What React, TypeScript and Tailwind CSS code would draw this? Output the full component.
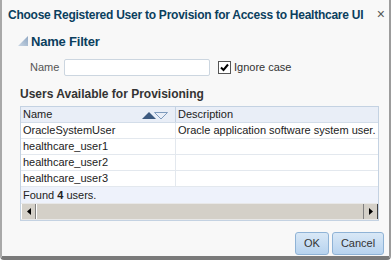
import React from 'react';

const rows = [
  { name: 'OracleSystemUser', desc: 'Oracle application software system user.' },
  { name: 'healthcare_user1', desc: '' },
  { name: 'healthcare_user2', desc: '' },
  { name: 'healthcare_user3', desc: '' },
];

function SortIcons() {
  return (
    <svg width="28" height="10" viewBox="0 0 28 10">
      <polygon points="1,9 8,2 15,9" fill="#3d5a80" />
      <polygon points="13.5,2.5 26.5,2.5 20,9" fill="none" stroke="#7f9bbd" strokeWidth="1" />
    </svg>
  );
}

export default function App() {
  return (
    <div
      className="w-[391px] h-[260px] bg-[#f8f8f8] border-l-2 border-r-2 border-b-4 border-l-[#a9a9a9] border-r-[#9c9c9c] border-b-[#7a7a7a] rounded-b-[4px] overflow-hidden text-[11px] text-[#222]"
      style={{ fontFamily: '"Liberation Sans", Arial, sans-serif' }}
    >
      <div className="flex items-center justify-between pl-[6px] pr-[4px] h-[30px]">
        <span className="font-bold text-[12px] text-[#0b3f5e] leading-none whitespace-nowrap tracking-[-0.25px]">
          Choose Registered User to Provision for Access to Healthcare UI
        </span>
        <span className="text-[14px] text-[#555] leading-none pb-[3px]">×</span>
      </div>

      <div className="flex items-center gap-[2px] pl-[16px] h-[22px]">
        <svg width="11" height="11" viewBox="0 0 11 11">
          <defs>
            <linearGradient id="tg" x1="0" y1="1" x2="1" y2="0">
              <stop offset="0" stopColor="#c9d6e4" />
              <stop offset="1" stopColor="#8ea6c2" />
            </linearGradient>
          </defs>
          <polygon points="0,10 10,0 10,10" fill="url(#tg)" />
        </svg>
        <span className="font-bold text-[13px] text-[#0b3f5e] leading-none tracking-[-0.2px]">Name Filter</span>
      </div>

      <div className="flex items-center pl-[28px] h-[30px]">
        <span className="text-[#555] text-[11px] w-[34px]">Name</span>
        <div className="w-[146px] h-[17px] bg-white border border-[#ccd6e0] rounded-[2px]" />
        <div className="ml-[8px] w-[13px] h-[13px] border border-[#555] bg-white flex items-center justify-center">
          <svg width="9" height="9" viewBox="0 0 9 9">
            <path d="M1 4.5 L3.5 7 L8 1.5" fill="none" stroke="#000" strokeWidth="2" />
          </svg>
        </div>
        <span className="ml-[3px] text-[#333]">Ignore case</span>
      </div>

      <div className="flex items-center pl-[18px] font-bold text-[12px] text-[#333] leading-none h-[24px]">
        Users Available for Provisioning
      </div>

      <div className="ml-[18px] w-[359px] border border-[#c4d2e2] bg-white">
        <div className="flex h-[16px] bg-[#e9eef7] border-b border-[#d3dde9]">
          <div className="w-[155px] flex items-center justify-between pl-[2px] pr-[6px] border-r border-[#c4d2e2]">
            <span>Name</span>
            <SortIcons />
          </div>
          <div className="flex-1 flex items-center pl-[2px]">Description</div>
        </div>
        {rows.map((r) => (
          <div key={r.name} className="flex h-[16px] border-b border-[#e3e8ee]">
            <div className="w-[155px] flex items-center pl-[2px] border-r border-[#e3e8ee]">{r.name}</div>
            <div className="flex-1 flex items-center pl-[2px] whitespace-nowrap overflow-hidden">{r.desc}</div>
          </div>
        ))}
        <div className="h-[16px] flex items-center pl-[2px] bg-[#eef2fb]">
          <span>
            Found <b>4</b> users.
          </span>
        </div>
        <div className="flex h-[17px] bg-[#d4d0c8] border-t border-[#e8e8e8] border-b border-[#404040]">
          <div className="w-[15px] h-full bg-[#d4d0c8] border-r border-[#808080] border-l border-l-white flex items-center justify-center">
            <svg width="4" height="7" viewBox="0 0 4 7"><polygon points="4,0 0,3.5 4,7" fill="#000" /></svg>
          </div>
          <div className="flex-1 border-l border-white" />
          <div className="w-[15px] h-full border-l border-[#808080] border-r border-r-[#404040] flex items-center justify-center">
            <svg width="4" height="7" viewBox="0 0 4 7"><polygon points="0,0 4,3.5 0,7" fill="#000" /></svg>
          </div>
        </div>
      </div>

      <div className="flex justify-end gap-[3px] pr-[5px] mt-[11px]">
        <button className="w-[34px] h-[23px] rounded-[3px] border border-[#8fb3d6] bg-gradient-to-b from-[#d9e8f6] to-[#b7d3ef] text-[#333] text-[11px]">
          OK
        </button>
        <button className="w-[52px] h-[23px] rounded-[3px] border border-[#8fb3d6] bg-gradient-to-b from-[#d9e8f6] to-[#b7d3ef] text-[#333] text-[11px]">
          Cancel
        </button>
      </div>
    </div>
  );
}
